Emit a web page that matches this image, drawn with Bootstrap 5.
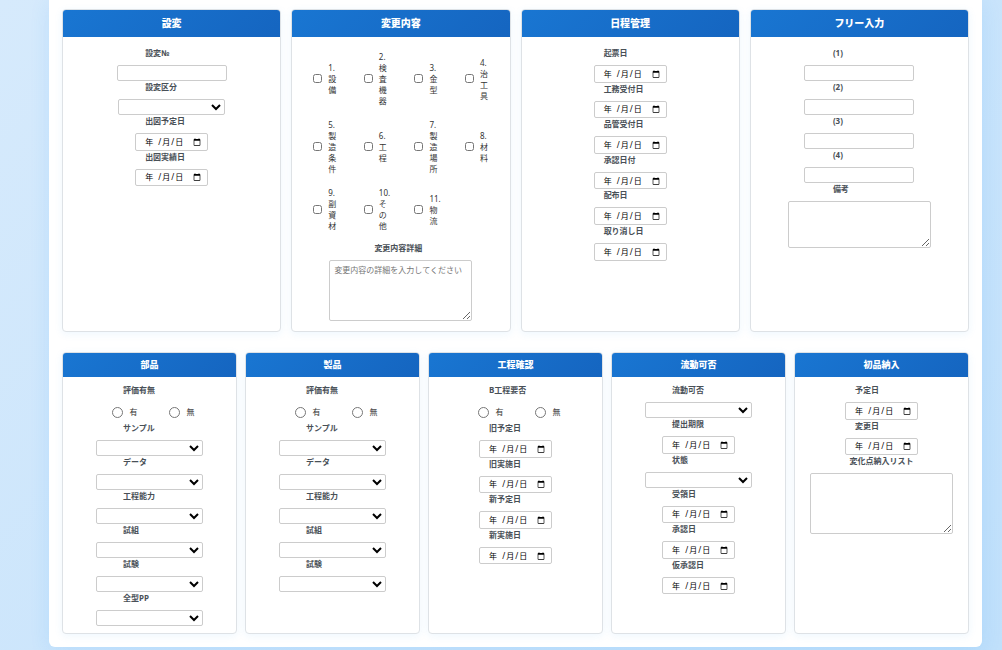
<!DOCTYPE html>
<html lang="ja">
<head>
<meta charset="utf-8">
<meta name="viewport" content="width=device-width, initial-scale=1">
<title>設変管理</title>
<link href="https://cdn.jsdelivr.net/npm/bootstrap@5.3.0/dist/css/bootstrap.min.css" rel="stylesheet">
<style>
body{font-family:"Noto Sans","Noto Sans CJK JP",sans-serif;font-size:8px;line-height:12px;color:#333;background:linear-gradient(135deg,#d6eafc,#c0e0fb);min-height:100vh;padding:0 20px 3px 49px}
.sheet{background:#fff;border-radius:0 0 6px 6px;box-shadow:0 4px 20px rgba(33,150,243,.12);padding:9px 13px 13px}
.panels{display:grid;grid-template-columns:repeat(4,minmax(0,1fr));gap:10px;margin-bottom:20px}
.panels.five{grid-template-columns:repeat(5,minmax(0,1fr));gap:8px;margin-bottom:0}
.panel{background:#fff;border:1px solid #dee2e6;border-radius:4px;box-shadow:0 2px 8px rgba(33,150,243,.08);overflow:hidden}
.panel h2{margin:0;font-size:10px;font-weight:900;line-height:27px;color:#fff;text-align:center;background:linear-gradient(135deg,#1976d2,#1565c0)}
.five .panel h2{font-size:9px;line-height:24px}
.fields{padding:10px}
.five .fields{padding:7px}
.caption{display:block;min-width:53px;font-weight:700;color:#495057;margin-bottom:6px}
.field{border:1px solid #ccc;border-radius:2px;background-color:#fff;font-size:8px;color:#000;padding:2px}
input.field{width:110px;height:16px}
select.field{width:107px;height:16px}
.datebox input.field{display:block;width:73px;height:2.2em;padding:2px 4px 2px 8px}
.datebox span{display:none;top:0;bottom:0;left:10px;align-items:center;white-space:pre;color:#000;pointer-events:none}
.datebox i{font-style:normal;padding:0 1px}
.datebox input:invalid:not(:focus)::-webkit-datetime-edit{opacity:0}
.datebox input:invalid:not(:focus)+span{display:flex}
textarea.field{width:143px;height:47px;padding:3px 4px;resize:both}
textarea.tall{height:61px}
textarea::placeholder{color:#757575}
.choices{height:20px}
.choices label{width:57px;padding-left:19px;gap:7px}
.choices input{width:11px;height:11px;margin:0}
.checks{display:grid;grid-template-columns:repeat(4,minmax(0,1fr));gap:5px;line-height:11px;margin-bottom:7px;align-self:stretch}
.checks label{padding:4px 0 4px 11px;gap:6px}
.checks input{width:9px;height:9px;margin:0;flex:none}
.checks span{flex:0 0 10px;width:10px}
</style>
<script src="https://cdn.jsdelivr.net/npm/bootstrap@5.3.0/dist/js/bootstrap.bundle.min.js"></script>
</head>
<body>
<main class="sheet">
<div class="panels">
<section class="panel"><h2>設変</h2><div class="fields d-flex flex-column align-items-center">
<label class="caption" for="a1">設変№</label><input class="field" type="text" id="a1">
<label class="caption" for="a2">設変区分</label><select class="field" id="a2"><option></option></select>
<label class="caption" for="a3">出図予定日</label><div class="datebox position-relative"><input class="field" type="date" id="a3" required><span class="position-absolute">年&nbsp; <i>/</i>月<i>/</i>日</span></div>
<label class="caption" for="a4">出図実績日</label><div class="datebox position-relative"><input class="field" type="date" id="a4" required><span class="position-absolute">年&nbsp; <i>/</i>月<i>/</i>日</span></div>
</div></section>
<section class="panel"><h2>変更内容</h2><div class="fields d-flex flex-column align-items-center">
<div class="checks">
<label class="d-flex align-items-center"><input type="checkbox"><span>1. 設備</span></label>
<label class="d-flex align-items-center"><input type="checkbox"><span>2. 検査機器</span></label>
<label class="d-flex align-items-center"><input type="checkbox"><span>3. 金型</span></label>
<label class="d-flex align-items-center"><input type="checkbox"><span>4. 治工具</span></label>
<label class="d-flex align-items-center"><input type="checkbox"><span>5. 製造条件</span></label>
<label class="d-flex align-items-center"><input type="checkbox"><span>6. 工程</span></label>
<label class="d-flex align-items-center"><input type="checkbox"><span>7. 製造場所</span></label>
<label class="d-flex align-items-center"><input type="checkbox"><span>8. 材料</span></label>
<label class="d-flex align-items-center"><input type="checkbox"><span>9. 副資材</span></label>
<label class="d-flex align-items-center"><input type="checkbox"><span>10. その他</span></label>
<label class="d-flex align-items-center"><input type="checkbox"><span>11. 物流</span></label>
</div>
<label class="caption" for="b1">変更内容詳細</label><textarea class="field tall" id="b1" placeholder="変更内容の詳細を入力してください"></textarea>
</div></section>
<section class="panel"><h2>日程管理</h2><div class="fields d-flex flex-column align-items-center">
<label class="caption" for="c1">起票日</label><div class="datebox position-relative"><input class="field" type="date" id="c1" required><span class="position-absolute">年&nbsp; <i>/</i>月<i>/</i>日</span></div>
<label class="caption" for="c2">工務受付日</label><div class="datebox position-relative"><input class="field" type="date" id="c2" required><span class="position-absolute">年&nbsp; <i>/</i>月<i>/</i>日</span></div>
<label class="caption" for="c3">品管受付日</label><div class="datebox position-relative"><input class="field" type="date" id="c3" required><span class="position-absolute">年&nbsp; <i>/</i>月<i>/</i>日</span></div>
<label class="caption" for="c4">承認日付</label><div class="datebox position-relative"><input class="field" type="date" id="c4" required><span class="position-absolute">年&nbsp; <i>/</i>月<i>/</i>日</span></div>
<label class="caption" for="c5">配布日</label><div class="datebox position-relative"><input class="field" type="date" id="c5" required><span class="position-absolute">年&nbsp; <i>/</i>月<i>/</i>日</span></div>
<label class="caption" for="c6">取り消し日</label><div class="datebox position-relative"><input class="field" type="date" id="c6" required><span class="position-absolute">年&nbsp; <i>/</i>月<i>/</i>日</span></div>
</div></section>
<section class="panel"><h2>フリー入力</h2><div class="fields d-flex flex-column align-items-center">
<label class="caption" for="d1">(1)</label><input class="field" type="text" id="d1">
<label class="caption" for="d2">(2)</label><input class="field" type="text" id="d2">
<label class="caption" for="d3">(3)</label><input class="field" type="text" id="d3">
<label class="caption" for="d4">(4)</label><input class="field" type="text" id="d4">
<label class="caption" for="d5">備考</label><textarea class="field" id="d5"></textarea>
</div></section>
</div>
<div class="panels five">
<section class="panel"><h2>部品</h2><div class="fields d-flex flex-column align-items-center">
<span class="caption">評価有無</span><div class="choices d-flex"><label class="d-flex align-items-center"><input type="radio" name="e0">有</label><label class="d-flex align-items-center"><input type="radio" name="e0">無</label></div>
<label class="caption" for="e1">サンプル</label><select class="field" id="e1"><option></option></select>
<label class="caption" for="e2">データ</label><select class="field" id="e2"><option></option></select>
<label class="caption" for="e3">工程能力</label><select class="field" id="e3"><option></option></select>
<label class="caption" for="e4">試組</label><select class="field" id="e4"><option></option></select>
<label class="caption" for="e5">試験</label><select class="field" id="e5"><option></option></select>
<label class="caption" for="e6">全型PP</label><select class="field" id="e6"><option></option></select>
</div></section>
<section class="panel"><h2>製品</h2><div class="fields d-flex flex-column align-items-center">
<span class="caption">評価有無</span><div class="choices d-flex"><label class="d-flex align-items-center"><input type="radio" name="f0">有</label><label class="d-flex align-items-center"><input type="radio" name="f0">無</label></div>
<label class="caption" for="f1">サンプル</label><select class="field" id="f1"><option></option></select>
<label class="caption" for="f2">データ</label><select class="field" id="f2"><option></option></select>
<label class="caption" for="f3">工程能力</label><select class="field" id="f3"><option></option></select>
<label class="caption" for="f4">試組</label><select class="field" id="f4"><option></option></select>
<label class="caption" for="f5">試験</label><select class="field" id="f5"><option></option></select>
</div></section>
<section class="panel"><h2>工程確認</h2><div class="fields d-flex flex-column align-items-center">
<span class="caption">B工程要否</span><div class="choices d-flex"><label class="d-flex align-items-center"><input type="radio" name="g0">有</label><label class="d-flex align-items-center"><input type="radio" name="g0">無</label></div>
<label class="caption" for="g1">旧予定日</label><div class="datebox position-relative"><input class="field" type="date" id="g1" required><span class="position-absolute">年&nbsp; <i>/</i>月<i>/</i>日</span></div>
<label class="caption" for="g2">旧実施日</label><div class="datebox position-relative"><input class="field" type="date" id="g2" required><span class="position-absolute">年&nbsp; <i>/</i>月<i>/</i>日</span></div>
<label class="caption" for="g3">新予定日</label><div class="datebox position-relative"><input class="field" type="date" id="g3" required><span class="position-absolute">年&nbsp; <i>/</i>月<i>/</i>日</span></div>
<label class="caption" for="g4">新実施日</label><div class="datebox position-relative"><input class="field" type="date" id="g4" required><span class="position-absolute">年&nbsp; <i>/</i>月<i>/</i>日</span></div>
</div></section>
<section class="panel"><h2>流動可否</h2><div class="fields d-flex flex-column align-items-center">
<label class="caption" for="h1">流動可否</label><select class="field" id="h1"><option></option></select>
<label class="caption" for="h2">提出期限</label><div class="datebox position-relative"><input class="field" type="date" id="h2" required><span class="position-absolute">年&nbsp; <i>/</i>月<i>/</i>日</span></div>
<label class="caption" for="h3">状態</label><select class="field" id="h3"><option></option></select>
<label class="caption" for="h4">受領日</label><div class="datebox position-relative"><input class="field" type="date" id="h4" required><span class="position-absolute">年&nbsp; <i>/</i>月<i>/</i>日</span></div>
<label class="caption" for="h5">承認日</label><div class="datebox position-relative"><input class="field" type="date" id="h5" required><span class="position-absolute">年&nbsp; <i>/</i>月<i>/</i>日</span></div>
<label class="caption" for="h6">仮承認日</label><div class="datebox position-relative"><input class="field" type="date" id="h6" required><span class="position-absolute">年&nbsp; <i>/</i>月<i>/</i>日</span></div>
</div></section>
<section class="panel"><h2>初品納入</h2><div class="fields d-flex flex-column align-items-center">
<label class="caption" for="i1">予定日</label><div class="datebox position-relative"><input class="field" type="date" id="i1" required><span class="position-absolute">年&nbsp; <i>/</i>月<i>/</i>日</span></div>
<label class="caption" for="i2">変更日</label><div class="datebox position-relative"><input class="field" type="date" id="i2" required><span class="position-absolute">年&nbsp; <i>/</i>月<i>/</i>日</span></div>
<label class="caption" for="i3">変化点納入リスト</label><textarea class="field tall" id="i3"></textarea>
</div></section>
</div>
</main>
</body>
</html>
